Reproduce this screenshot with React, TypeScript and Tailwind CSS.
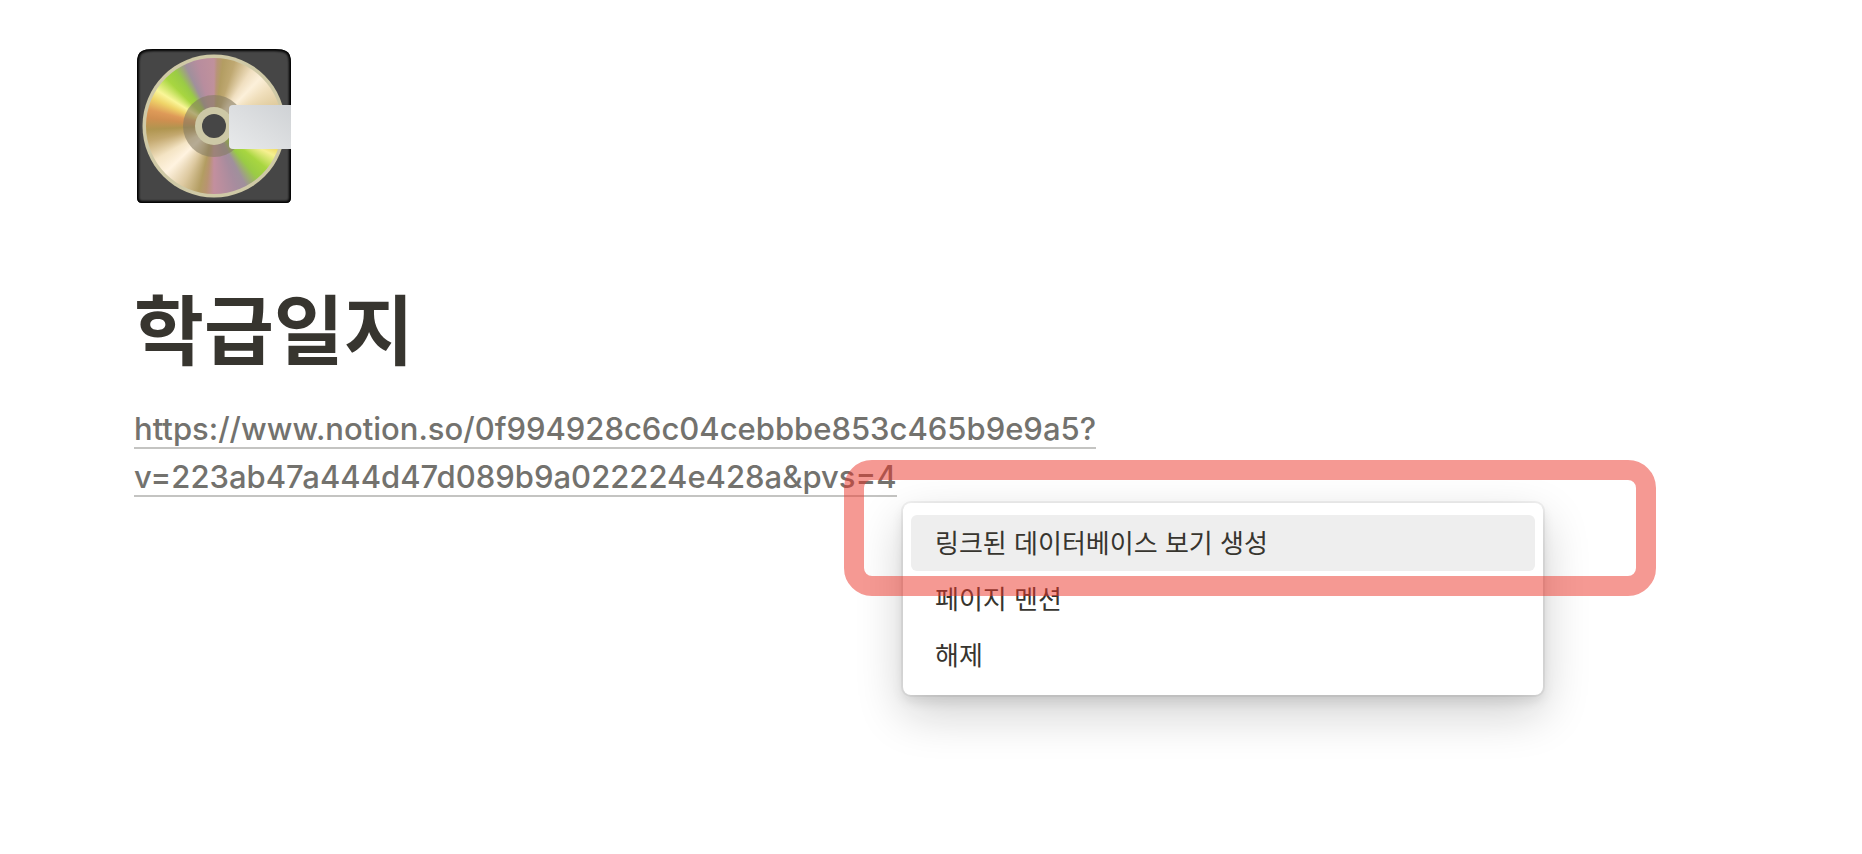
interface MenuItem {
  id: string;
  label: string;
}

const PAGE_URL = 'https://www.notion.so/0f994928c6c04cebbbe853c465b9e9a5?v=223ab47a444d47d089b9a022224e428a&pvs=4';

const menuItems: MenuItem[] = [
  { id: 'linked-view', label: '링크된 데이터베이스 보기 생성' },
  { id: 'mention', label: '페이지 멘션' },
  { id: 'dismiss', label: '해제' },
];

const CASE_PATH = 'M1 15Q1 5 6 3Q9 1 17 1H139Q147 1 150 3Q155 5 155 15V150Q155 155 150 155H6Q1 155 1 150Z';

function DiscIcon() {
  return (
    <svg viewBox="0 0 156 156" className="h-[156px] w-[156px]" role="img" aria-label="컴퓨터 디스크">
      <defs>
        <linearGradient id="tray" x1="0" y1="1" x2="1" y2="0">
          <stop offset="0" stopColor="#e8eaeb" />
          <stop offset="0.5" stopColor="#dcdee0" />
          <stop offset="1" stopColor="#cfd2d5" />
        </linearGradient>
        <clipPath id="case">
          <path d={CASE_PATH} />
        </clipPath>
        <filter id="edge" x="-10%" y="-10%" width="120%" height="120%">
          <feGaussianBlur stdDeviation="1" />
        </filter>
      </defs>
      <g clipPath="url(#case)">
        <rect width="156" height="156" fill="#464646" />
        <path d={CASE_PATH} fill="none" stroke="#000405" strokeWidth="4" filter="url(#edge)" />
      </g>
      <circle cx="78" cy="78" r="71.5" fill="#cfc9a6" />
      <foreignObject x="10" y="10" width="136" height="136">
        <div className="h-full w-full rounded-full bg-[conic-gradient(from_0deg,#c0919c_0deg,#b89478_3deg,#b39d62_8deg,#bfa871_18deg,#f0dfc0_34deg,#fcf0da_44deg,#f0dfbc_56deg,#dcc797_75deg,#e8b860_100deg,#eed860_109deg,#f6f090_116deg,#a8d640_129deg,#9acb45_140deg,#a0909c_152deg,#a78c9e_160deg,#c38f9e_180deg,#b89470_187deg,#b39d62_193deg,#ddc9a0_208deg,#fff3e0_226deg,#f4e4c4_240deg,#c4a970_257deg,#b0954f_267deg,#d08f50_277deg,#de9a58_284deg,#efd468_294deg,#faf698_302deg,#a8d640_315deg,#9acb45_325deg,#a0909c_335deg,#b88d9e_346deg,#c0919c_360deg)]" />
      </foreignObject>
      <circle cx="78" cy="78" r="31" fill="#857c62" fillOpacity=".6" />
      <circle cx="78" cy="78" r="19" fill="#cdc8a6" />
      <circle cx="78" cy="78" r="12" fill="#464646" />
      <path d="M97 57H155V101H97Q93 101 93 97V61Q93 57 97 57Z" fill="url(#tray)" />
    </svg>
  );
}

function PasteMenu() {
  return (
    <div
      role="menu"
      className="w-[640px] rounded-lg bg-white px-2 py-3 shadow-[0_0_0_2px_rgba(15,15,15,0.05),0_6px_12px_rgba(15,15,15,0.1),0_18px_48px_rgba(15,15,15,0.2)]"
    >
      {menuItems.map((item, i) => (
        <button
          key={item.id}
          role="menuitem"
          className={`flex h-14 w-full items-center rounded-md px-6 text-left text-[26px] text-[#37352f] ${
            i === 0 ? 'bg-[#eeeeee]' : ''
          }`}
        >
          {item.label}
        </button>
      ))}
    </div>
  );
}

export default function App() {
  return (
    <main className="relative min-h-screen px-[134px] pt-12 font-['Inter','Noto_Sans_CJK_KR',sans-serif]">
      <div className="pl-0.5">
        <DiscIcon />
      </div>

      <h1 className="mt-[79px] text-[76px] leading-[96px] font-bold text-[#37352f]">학급일지</h1>

      <p className="mt-[26px] max-w-[1000px] text-[31px] leading-[48px] font-[550]">
        <a href={PAGE_URL} className="border-b-2 border-[#c4c4c2] break-words text-[#73726e]">
          {PAGE_URL}
        </a>
      </p>

      <div className="absolute top-[503px] left-[903px]">
        <PasteMenu />
      </div>
      <div className="pointer-events-none absolute top-[460px] left-[844px] h-[136px] w-[812px] rounded-[28px] border-[20px] border-[#eb3327]/50" />
    </main>
  );
}
